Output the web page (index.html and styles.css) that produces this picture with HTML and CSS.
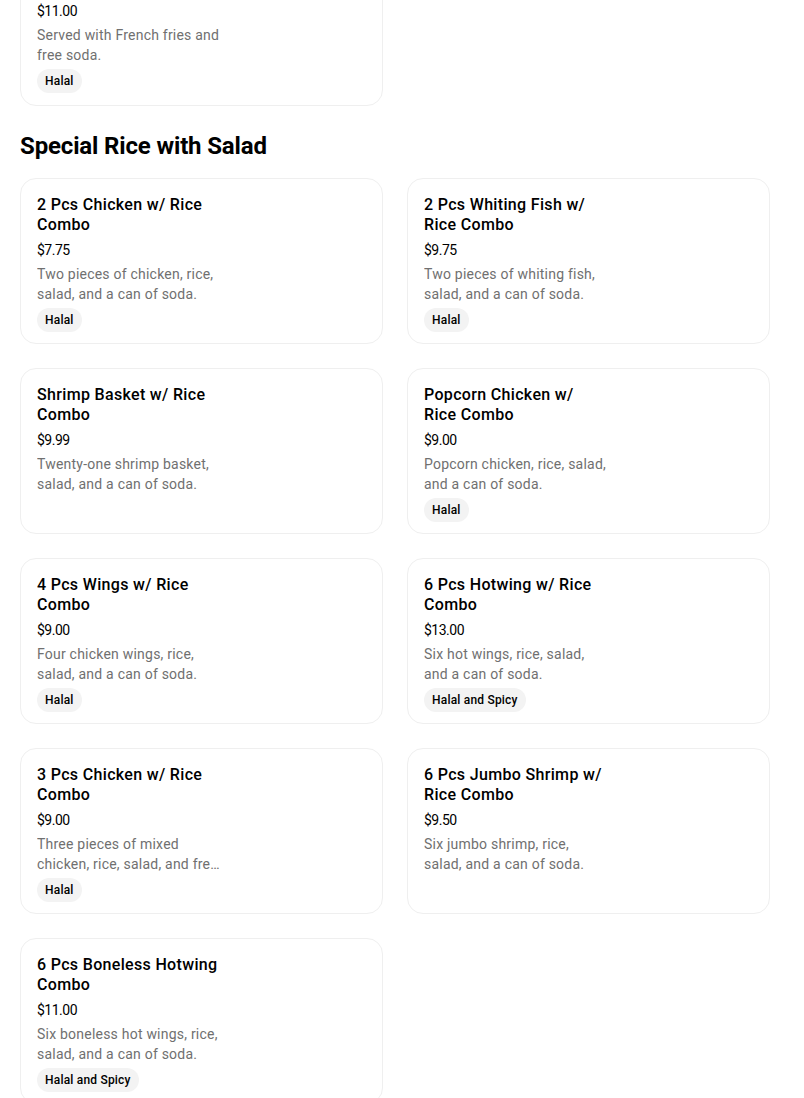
FILE: index.html
```html
<!DOCTYPE html>
<html>
<head>
<meta charset="utf-8">
<link rel="stylesheet" href="styles.css">
</head>
<body>
<div class="page">
  <div class="grid">
    <div class="card card-top">
      <div class="info">
        <div class="price">$11.00</div>
        <div class="desc">Served with French fries and free soda.</div>
        <span class="badge">Halal</span>
      </div>
    </div>
  </div>

  <h2 class="section-title">Special Rice with Salad</h2>

  <div class="grid">
    <div class="card">
      <div class="info">
        <div class="title">2 Pcs Chicken w/ Rice Combo</div>
        <div class="price">$7.75</div>
        <div class="desc">Two pieces of chicken, rice, salad, and a can of soda.</div>
        <span class="badge">Halal</span>
      </div>
    </div>
    <div class="card">
      <div class="info">
        <div class="title">2 Pcs Whiting Fish w/ Rice Combo</div>
        <div class="price">$9.75</div>
        <div class="desc">Two pieces of whiting fish, salad, and a can of soda.</div>
        <span class="badge">Halal</span>
      </div>
    </div>
    <div class="card">
      <div class="info">
        <div class="title">Shrimp Basket w/ Rice Combo</div>
        <div class="price">$9.99</div>
        <div class="desc">Twenty-one shrimp basket, salad, and a can of soda.</div>
      </div>
    </div>
    <div class="card">
      <div class="info">
        <div class="title">Popcorn Chicken w/ Rice Combo</div>
        <div class="price">$9.00</div>
        <div class="desc">Popcorn chicken, rice, salad, and a can of soda.</div>
        <span class="badge">Halal</span>
      </div>
    </div>
    <div class="card">
      <div class="info">
        <div class="title">4 Pcs Wings w/ Rice Combo</div>
        <div class="price">$9.00</div>
        <div class="desc">Four chicken wings, rice, salad, and a can of soda.</div>
        <span class="badge">Halal</span>
      </div>
    </div>
    <div class="card">
      <div class="info">
        <div class="title">6 Pcs Hotwing w/ Rice Combo</div>
        <div class="price">$13.00</div>
        <div class="desc">Six hot wings, rice, salad, and a can of soda.</div>
        <span class="badge">Halal and Spicy</span>
      </div>
    </div>
    <div class="card">
      <div class="info">
        <div class="title">3 Pcs Chicken w/ Rice Combo</div>
        <div class="price">$9.00</div>
        <div class="desc">Three pieces of mixed chicken, rice, salad, and free soda.</div>
        <span class="badge">Halal</span>
      </div>
    </div>
    <div class="card">
      <div class="info">
        <div class="title">6 Pcs Jumbo Shrimp w/ Rice Combo</div>
        <div class="price">$9.50</div>
        <div class="desc">Six jumbo shrimp, rice, salad, and a can of soda.</div>
      </div>
    </div>
    <div class="card">
      <div class="info">
        <div class="title">6 Pcs Boneless Hotwing Combo</div>
        <div class="price">$11.00</div>
        <div class="desc">Six boneless hot wings, rice, salad, and a can of soda.</div>
        <span class="badge">Halal and Spicy</span>
      </div>
    </div>
  </div>
</div>
</body>
</html>
```

FILE: styles.css
```css
html, body {
  margin: 0;
  padding: 0;
  background: #ffffff;
}
body {
  font-family: Roboto, "Liberation Sans", Arial, sans-serif;
  color: #000000;
  overflow: hidden;
}
.page {
  width: 750px;
  padding: 0 20px;
  margin-top: -16px;
}
.grid {
  display: grid;
  grid-template-columns: 1fr 1fr;
  column-gap: 24px;
  row-gap: 24px;
}
.card {
  box-sizing: border-box;
  min-height: 166px;
  border: 1px solid #efefef;
  border-radius: 16px;
  padding: 16px 16px 11px 16px;
  display: flex;
}
.card-top {
  min-height: 0;
  padding-bottom: 12px;
}
.info {
  width: 186px;
  display: flex;
  flex-direction: column;
  align-items: flex-start;
}
.title {
  font-size: 16px;
  line-height: 20px;
  font-weight: 500;
  letter-spacing: 0.33px;
  color: #000000;
  margin-bottom: 5px;
}
.price {
  font-size: 14px;
  line-height: 20px;
  letter-spacing: -0.5px;
  color: #000000;
  margin-bottom: 4px;
}
.desc {
  font-size: 14px;
  line-height: 20px;
  letter-spacing: 0.22px;
  color: #707070;
  display: -webkit-box;
  -webkit-line-clamp: 2;
  -webkit-box-orient: vertical;
  overflow: hidden;
}
.badge {
  margin-top: 4px;
  display: inline-block;
  background: #f3f3f3;
  border-radius: 12px;
  padding: 0 8px;
  font-size: 12px;
  line-height: 24px;
  font-weight: 500;
  letter-spacing: 0.2px;
  color: #000000;
}
.section-title {
  margin: 24px 0 16px 0;
  font-size: 24px;
  line-height: 32px;
  font-weight: 700;
  letter-spacing: -0.15px;
  color: #000000;
}
```
